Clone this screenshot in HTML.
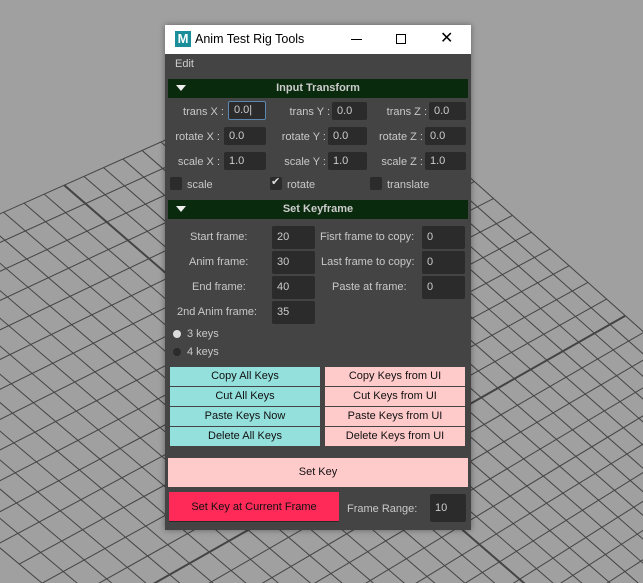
<!DOCTYPE html>
<html><head><meta charset="utf-8"><style>
*{margin:0;padding:0;box-sizing:border-box}
body{width:643px;height:583px;background:#a0a0a0;position:relative;overflow:hidden;font-family:"Liberation Sans",sans-serif}
svg.g{position:absolute;left:0;top:0}
.win{position:absolute;left:165px;top:25px;width:306px;height:505px;background:#444;box-shadow:0 0 6px rgba(0,0,0,.4)}
.tb{position:absolute;left:0;top:0;width:306px;height:29px;background:#fff}
.a{position:absolute;white-space:nowrap}
.lab{color:#c8c8c8;font-size:11px;text-align:right}
.f{position:absolute;background:#2b2b2b;border-radius:2px;color:#ccc;font-size:11px;padding-left:5px;line-height:18px;height:18px}
.hd{position:absolute;left:3px;width:300px;height:19px;background:#0a2a0e;color:#ccc;font-weight:bold;font-size:11px;text-align:center;line-height:19px}
.tri{position:absolute;left:8px;top:6px;width:0;height:0;border-left:5px solid transparent;border-right:5px solid transparent;border-top:6px solid #eee}
.cb{position:absolute;width:12px;height:13px;background:#2b2b2b;border-radius:2px}
.bt{position:absolute;font-size:11px;color:#111;text-align:center;line-height:19px;height:19px}
.t{background:#94e0dc}.p{background:#ffcaca}
</style></head><body>
<svg class="g" width="643" height="583" id="g"></svg>
<div class="win">
 <div class="tb">
  <div class="a" style="left:10px;top:6px;width:16px;height:16px;background:#1a8f9a;color:#fff;font-weight:bold;font-size:13px;line-height:16px;text-align:center">M</div>
  <div class="a" style="left:30px;top:7px;font-size:12.5px;color:#000">Anim Test Rig Tools</div>
  <div class="a" style="left:186px;top:14px;width:11px;height:1px;background:#000"></div>
  <div class="a" style="left:231px;top:9px;width:10px;height:10px;border:1px solid #000"></div>
  <div class="a" style="left:275px;top:3px;font-size:16px;color:#000">✕</div>
 </div>
 <div class="a" style="left:10px;top:33px;font-size:11px;color:#ccc">Edit</div>
 <div class="hd" style="top:54px"><div class="tri"></div>Input Transform</div>
 <div class="a lab" style="right:247px;top:81px">trans X :</div>
 <div class="f" style="left:63px;top:76px;width:38px;height:19px;border:1px solid #5a88b0;line-height:16px">0.0|</div>
 <div class="a lab" style="right:141px;top:81px">trans Y :</div>
 <div class="f" style="left:167px;top:77px;width:35px">0.0</div>
 <div class="a lab" style="right:44px;top:81px">trans Z :</div>
 <div class="f" style="left:264px;top:77px;width:37px">0.0</div>

 <div class="a lab" style="right:251px;top:106px">rotate X :</div>
 <div class="f" style="left:59px;top:102px;width:42px">0.0</div>
 <div class="a lab" style="right:145px;top:106px">rotate Y :</div>
 <div class="f" style="left:163px;top:102px;width:39px">0.0</div>
 <div class="a lab" style="right:48px;top:106px">rotate Z :</div>
 <div class="f" style="left:260px;top:102px;width:41px">0.0</div>

 <div class="a lab" style="right:251px;top:131px">scale X :</div>
 <div class="f" style="left:59px;top:127px;width:42px">1.0</div>
 <div class="a lab" style="right:145px;top:131px">scale Y :</div>
 <div class="f" style="left:163px;top:127px;width:39px">1.0</div>
 <div class="a lab" style="right:48px;top:131px">scale Z :</div>
 <div class="f" style="left:260px;top:127px;width:41px">1.0</div>

 <div class="cb" style="left:5px;top:152px"></div><div class="a lab" style="left:22px;top:154px">scale</div>
 <div class="cb" style="left:105px;top:152px"></div><div class="a" style="left:106px;top:150px;color:#ddd;font-size:11px">✔</div><div class="a lab" style="left:122px;top:154px">rotate</div>
 <div class="cb" style="left:205px;top:152px"></div><div class="a lab" style="left:222px;top:154px">translate</div>

 <div class="hd" style="top:175px"><div class="tri"></div>Set Keyframe</div>
 <div class="a lab" style="left:25px;top:206px">Start frame:</div>
 <div class="f" style="left:107px;top:201px;width:43px;height:23px;line-height:23px">20</div>
 <div class="a lab" style="left:24px;top:231px">Anim frame:</div>
 <div class="f" style="left:107px;top:226px;width:43px;height:23px;line-height:23px">30</div>
 <div class="a lab" style="left:27px;top:256px">End frame:</div>
 <div class="f" style="left:107px;top:251px;width:43px;height:23px;line-height:23px">40</div>
 <div class="a lab" style="left:12px;top:281px">2nd Anim frame:</div>
 <div class="f" style="left:107px;top:276px;width:43px;height:23px;line-height:23px">35</div>
 <div class="a lab" style="left:155px;top:206px">Fisrt frame to copy:</div>
 <div class="f" style="left:257px;top:201px;width:43px;height:23px;line-height:23px">0</div>
 <div class="a lab" style="left:156px;top:231px">Last frame to copy:</div>
 <div class="f" style="left:257px;top:226px;width:43px;height:23px;line-height:23px">0</div>
 <div class="a lab" style="left:167px;top:256px">Paste at frame:</div>
 <div class="f" style="left:257px;top:251px;width:43px;height:23px;line-height:23px">0</div>

 <div class="a" style="left:8px;top:305px;width:8px;height:8px;border-radius:50%;background:#ddd"></div>
 <div class="a lab" style="left:22px;top:303px">3 keys</div>
 <div class="a" style="left:8px;top:323px;width:8px;height:8px;border-radius:50%;background:#2b2b2b"></div>
 <div class="a lab" style="left:22px;top:321px">4 keys</div>

 <div class="bt t" style="left:5px;top:342px;width:150px">Copy All Keys</div>
 <div class="bt t" style="left:5px;top:362px;width:150px">Cut All Keys</div>
 <div class="bt t" style="left:5px;top:382px;width:150px">Paste Keys Now</div>
 <div class="bt t" style="left:5px;top:402px;width:150px">Delete All Keys</div>
 <div class="bt p" style="left:160px;top:342px;width:140px">Copy Keys from UI</div>
 <div class="bt p" style="left:160px;top:362px;width:140px">Cut Keys from UI</div>
 <div class="bt p" style="left:160px;top:382px;width:140px">Paste Keys from UI</div>
 <div class="bt p" style="left:160px;top:402px;width:140px">Delete Keys from UI</div>

 <div class="bt p" style="left:3px;top:433px;width:300px;height:29px;line-height:29px">Set Key</div>
 <div class="bt" style="left:4px;top:467px;width:170px;height:30px;line-height:30px;background:#ff2a58;border-bottom:1px solid #2a2a2a">Set Key at Current Frame</div>
 <div class="a lab" style="left:182px;top:478px">Frame Range:</div>
 <div class="f" style="left:265px;top:469px;width:36px;height:28px;line-height:28px">10</div>
</div>
<script>
var s=document.getElementById('g');
var P=[[340,62],[900,560],[420,900],[-260,330]];
var x0=P[0][0],y0=P[0][1],x1=P[1][0],y1=P[1][1],x2=P[2][0],y2=P[2][1],x3=P[3][0],y3=P[3][1];
var dx1=x1-x2,dx2=x3-x2,dx3=x0-x1+x2-x3,dy1=y1-y2,dy2=y3-y2,dy3=y0-y1+y2-y3;
var den=dx1*dy2-dx2*dy1,g=(dx3*dy2-dx2*dy3)/den,h=(dx1*dy3-dx3*dy1)/den;
var a=x1-x0+g*x1,b=x3-x0+h*x3,c=x0,d=y1-y0+g*y1,e=y3-y0+h*y3,f=y0;
function m(u,v){var w=g*u+h*v+1;return[(a*u+b*v+c)/w,(d*u+e*v+f)/w]}
var n=30,H='';
for(var i=0;i<=n;i++){var t=i/n,w=(i==n/2)?2:1;
var p=m(t,0),q=m(t,1);H+='<line x1="'+p[0]+'" y1="'+p[1]+'" x2="'+q[0]+'" y2="'+q[1]+'" stroke="#444" stroke-width="'+w+'"/>';
p=m(0,t);q=m(1,t);H+='<line x1="'+p[0]+'" y1="'+p[1]+'" x2="'+q[0]+'" y2="'+q[1]+'" stroke="#444" stroke-width="'+w+'"/>';}
s.innerHTML=H;
</script>
</body></html>
